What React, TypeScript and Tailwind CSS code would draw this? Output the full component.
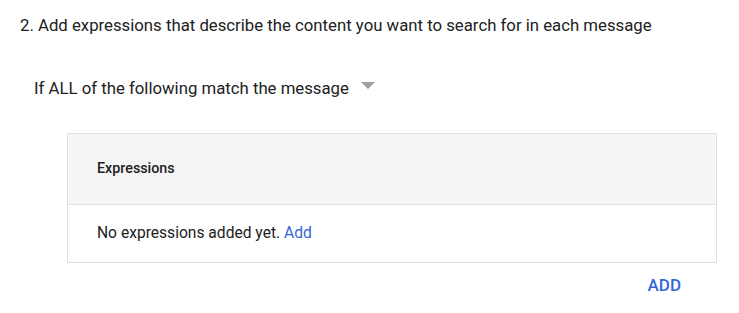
export default function App() {
  return (
    <div className="w-[739px] h-[313px] bg-white font-['Roboto',sans-serif] text-[#212121] overflow-hidden">
      <div className="pl-[20px] pt-[13px] text-[16.75px] leading-[24px]">
        2. Add expressions that describe the content you want to search for in each message
      </div>
      <div className="flex items-center pl-[34px] mt-[39px] h-[24px]">
        <span className="text-[16.75px] leading-[24px]">If ALL of the following match the message</span>
        <svg className="ml-[12px] mb-[6px]" width="14" height="7" viewBox="0 0 14 7">
          <path d="M0 0 L14 0 L7 7 Z" fill="#9e9e9e" />
        </svg>
      </div>
      <div className="ml-[67px] mt-[33px] w-[650px] border border-[#e0e0e0]">
        <div className="h-[71px] bg-[#f5f5f5] border-b border-[#e0e0e0] flex items-center pl-[29px]">
          <span className="text-[14.3px] font-medium">Expressions</span>
        </div>
        <div className="h-[57px] flex items-center pl-[29px] pt-[1px] text-[15.6px]">
          No expressions added yet.&nbsp;<span className="text-[#3367d6]">Add</span>
        </div>
      </div>
      <div className="flex justify-end pr-[58px] mt-[12px]">
        <span className="text-[17px] font-medium text-[#3367d6] leading-[20px]">ADD</span>
      </div>
    </div>
  );
}
